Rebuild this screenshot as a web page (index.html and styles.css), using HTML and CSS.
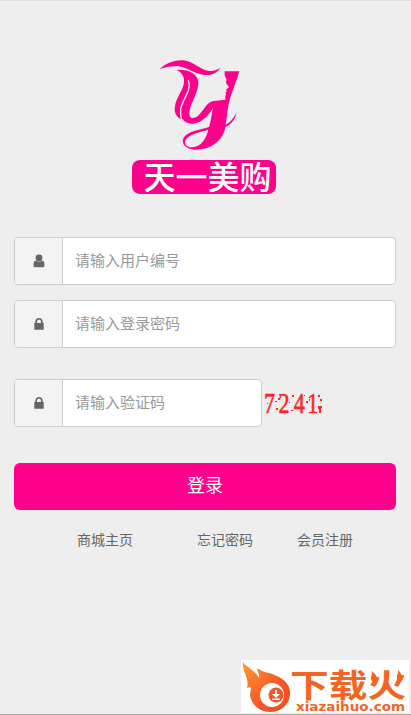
FILE: index.html
```
<!DOCTYPE html>
<html lang="zh-CN">
<head>
    <meta charset="UTF-8">
    <meta name="viewport" content="width=device-width, initial-scale=1">
    <title>登录</title>
    <link rel="stylesheet" href="styles.css">
</head>
<body>
    <div class="login-page">
        <div class="logo">
            <svg class="logo-mark" viewBox="0 0 270 300">
                <path d="M14 42C32 24 60 13 86 16C115 19 134 45 163 48C177 49 187 44 196 38C188 53 169 62 147 60C119 57 98 38 70 34C49 32 32 36 14 42Z"/>
                <path d="M65 45C98 42 128 56 130 82C131 105 114 134 107 155C101 172 101 187 112 189C132 191 143 161 161 145C172 135 191 137 211 134V122L214 118L210 114L215 110L213 104L222 96C216 88 210 84 215 75L209 61V49H253C245 78 233 104 224 134C215 167 215 207 208 229C195 266 159 286 117 284C91 282 79 266 85 250C95 229 137 224 162 216C169 195 170 174 174 159C161 180 143 203 115 206C100 207 88 201 83 192H77C62 184 57 171 60 153C64 128 85 105 87 82C88 67 82 52 65 45ZM160 224C134 231 98 239 91 256C87 270 97 278 112 277C140 275 154 248 160 224Z"/>
                <path class="logo-slit" d="M100 76C112 108 80 134 77 164C76 176 77 185 80 196"/>
                <path d="M207 211C224 205 237 189 245 171C241 194 226 212 206 218Z"/>
            </svg>
            <div class="logo-name">天一美购</div>
        </div>

        <form class="login-form">
            <div class="input-group">
                <label class="addon" for="userid">
                    <svg class="icon-user" viewBox="0 0 12 14"><circle cx="6" cy="4" r="3.4"/><path d="M3 6.6C1 6.8.5 9 .5 11.2C.5 12.6 1.3 13.3 2.5 13.3H9.5C10.7 13.3 11.5 12.6 11.5 11.2C11.5 9 11 6.8 9 6.6C7.5 8.2 4.5 8.2 3 6.6Z"/></svg>
                </label>
                <input type="text" id="userid" placeholder="请输入用户编号">
            </div>
            <div class="input-group">
                <label class="addon" for="password">
                    <svg class="icon-lock" viewBox="0 0 12 14"><path d="M1.300 6H2.300V4.500C2.300 2.400 3.800.9 6 .9S9.700 2.400 9.700 4.500V6H10.700V12.800H1.300ZM4.100 6H7.900V4.500C7.900 3.400 7.100 2.600 6 2.600S4.100 3.400 4.100 4.500Z"/></svg>
                </label>
                <input type="password" id="password" placeholder="请输入登录密码">
            </div>
            <div class="captcha-row">
                <div class="input-group captcha-group">
                    <label class="addon" for="captcha">
                        <svg class="icon-lock" viewBox="0 0 12 14"><path d="M1.300 6H2.300V4.500C2.300 2.400 3.800.9 6 .9S9.700 2.400 9.700 4.500V6H10.700V12.800H1.300ZM4.100 6H7.900V4.500C7.900 3.400 7.100 2.600 6 2.600S4.100 3.400 4.100 4.500Z"/></svg>
                    </label>
                    <input type="text" id="captcha" placeholder="请输入验证码">
                </div>
                <svg class="captcha-code" viewBox="0 0 60 36">
                    <g transform="scale(.76 1)"><text x="0 19 39 57" y="28">7241</text></g>
                    <path d="M11 16h2v1h-2zM12 23h2v2h-2zM15 9h2v1h-2zM14 13h2v2h-2zM28 10h2v2h-2zM25 17h1v1h-1zM42 16h2v2h-2zM45 14h1v2h-1zM54 10h2v2h-2zM56 14h2v2h-2zM54 21h4v2h-1v5h-2v-4h-1zM3 18h1v1H3zM27 25h2v1h-2zM40 10h1v1h-1z"/>
                </svg>
            </div>
            <button type="button" class="login-button">登录</button>
        </form>

        <div class="links">
            <a href="#">商城主页</a>
            <a href="#">忘记密码</a>
            <a href="#">会员注册</a>
        </div>
    </div>

    <!-- Download site badge -->
    <div class="site-badge">
        <svg viewBox="0 0 168 53">
            <defs>
                <linearGradient id="flame" x1="0" y1="0" x2="1" y2="1">
                    <stop offset="0" stop-color="#ff9a2d"/>
                    <stop offset=".6" stop-color="#f4582a"/>
                    <stop offset="1" stop-color="#ed4a20"/>
                </linearGradient>
            </defs>
            <path fill="url(#flame)" d="M2 2C6 8 14 10 18 18C19 14 16 11 16 8C22 13 29 12 36 16C45 20 50 27 49 35C48 45 40 52 29 52C18 52 10 44 9 35C9 32 11 29 9 27L6 28C9 18 1 13 2 2Z"/>
            <circle cx="31" cy="35" r="12" fill="#fff"/>
            <circle cx="35" cy="35" r="7.500" fill="#f4582a"/>
            <path fill="#fff" d="M34 30h2v4h3l-4 4-4-4h3zM31 38.500h8v1.500h-8z"/>
            <g transform="translate(49 37) scale(1.210 1)"><text class="badge-title" x="0 32 64" y="0">下载火</text></g>
            <path class="badge-flame" d="M132 22C127 18 133 15 130 11C136 14 137 18 134 22ZM157 20C154 16 158 13 157 10C161 13 159 16 163 15C163 19 160 21 157 20Z"/>
            <text class="badge-url" x="55" y="51" textLength="109" lengthAdjust="spacingAndGlyphs">xiazaihuo.com</text>
        </svg>
    </div>
</body>
</html>
```
FILE: styles.css
```
* {
    box-sizing: border-box;
}
body {
    margin: 0;
    background: #eee;
    color: #666;
    font-family: "Liberation Sans", "Noto Sans CJK SC", sans-serif;
}
.login-page {
    height: 715px;
    padding: 54px 15px 0 14px;
    border-top: 1px solid #ddd;
    border-bottom: 1px solid #aaa;
}
.logo {
    display: flex;
    flex-direction: column;
    align-items: center;
    height: 182px;
}
.logo-mark {
    display: block;
    width: 90px;
    height: 100px;
    margin-right: 10px;
    fill: #ff008c;
}
.logo-slit {
    fill: none;
    stroke: #eee;
    stroke-width: 4;
}
.logo-name {
    width: 144px;
    height: 34px;
    margin: 5px 0 0 -3px;
    padding-left: 8px;
    border-radius: 8px;
    background: #ff008c;
    color: #fff;
    font-size: 32px;
    font-weight: 500;
    line-height: 36px;
    text-align: center;
}
.input-group {
    display: flex;
    height: 48px;
    margin-bottom: 15px;
    border: 1px solid #ccc;
    border-radius: 4px;
    background: #fff;
    overflow: hidden;
}
.addon {
    display: flex;
    align-items: center;
    justify-content: center;
    width: 48px;
    border-right: 1px solid #ccc;
    background: #f3f3f3;
}
.addon svg {
    width: 12px;
    height: 14px;
    fill: #666;
}
.input-group input {
    flex: 1;
    min-width: 0;
    padding: 0 12px 2px;
    border: 0;
    outline: 0;
    background: none;
    font-family: inherit;
    font-size: 15px;
}
.input-group input::placeholder {
    color: #999;
    opacity: 1;
}
.captcha-row {
    display: flex;
    align-items: center;
    margin: 31px 0 36px;
}
.captcha-group {
    width: 248px;
    margin: 0;
}
.captcha-code {
    width: 60px;
    height: 36px;
    margin-left: 2px;
    overflow: visible;
    fill: #f22;
    font-family: "Liberation Serif", serif;
    font-size: 29px;
}
.captcha-code text {
    stroke: #f22;
    stroke-width: .6;
}
.login-button {
    display: block;
    width: 100%;
    height: 47px;
    padding: 0 0 5px;
    border: 0;
    border-radius: 6px;
    background: #ff008c;
    color: #fff;
    font-family: inherit;
    font-size: 18px;
}
.links {
    display: flex;
    padding: 20px 0 0 63px;
    font-size: 14px;
    line-height: 20px;
    white-space: nowrap;
}
.links a {
    flex: none;
    margin-right: 44px;
    color: #666;
    text-decoration: none;
}
.links a:first-child {
    margin-right: 64px;
}
.site-badge {
    position: absolute;
    top: 660px;
    left: 241px;
    width: 168px;
    height: 53px;
    background: #fff;
}
.site-badge svg {
    display: block;
}
.badge-title {
    fill: #f26522;
    font-size: 32px;
    font-weight: 700;
}
.badge-flame {
    fill: #f26522;
}
.badge-url {
    fill: #f26522;
    font-family: "DejaVu Sans", sans-serif;
    font-size: 13px;
    font-weight: 700;
}
```
